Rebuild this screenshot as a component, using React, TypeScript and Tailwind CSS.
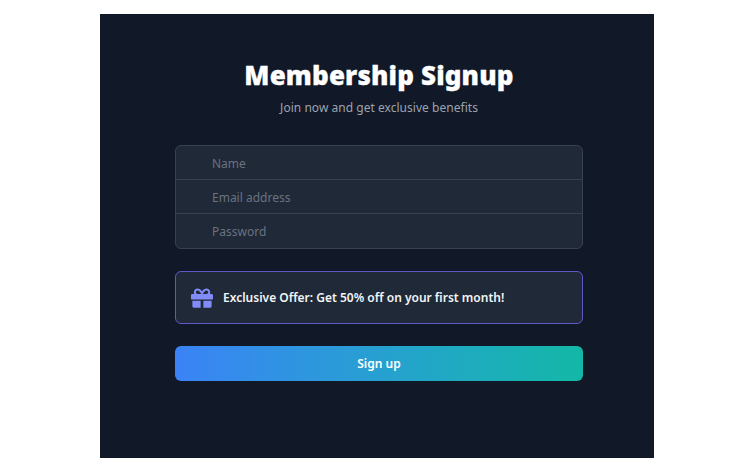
import { FaGift } from "react-icons/fa";

const fields = ["Name", "Email address", "Password"];

const App = () => {
  return (
    <div className="min-h-[469px] bg-white pt-[14px] pl-[100px] font-['Noto_Sans',sans-serif]">
      <section className="flex h-[444px] w-[554px] flex-col bg-[#111827] px-[71px] pt-[43px] pl-[75px]">
        <h2 className="text-center text-[26px] leading-[36px] font-black tracking-[0.15px] text-white [-webkit-text-stroke:0.3px_white]">
          Membership Signup
        </h2>
        <p className="mt-[6px] text-center text-[12px] leading-[18px] tracking-[0.03px] text-[#9ca3af]">
          Join now and get exclusive benefits
        </p>

        <div className="mt-[28px] overflow-hidden rounded-md border border-[#374151] bg-[#1f2937]">
          {fields.map((field) => (
            <div
              key={field}
              className="flex h-[34px] items-center border-b border-[#374151] pt-[2px] pl-[36px] text-[12px] text-[#6b7280] last:border-b-0"
            >
              {field}
            </div>
          ))}
        </div>

        <div className="mt-[22px] flex h-[53px] items-center gap-[10px] rounded-md border border-[#5f58c8] bg-[#1f2937] pl-[15px]">
          <FaGift size={22} className="text-[#818cf8]" />
          <p className="text-[12px] font-semibold text-[#f3f4f6]">
            Exclusive Offer: Get 50% off on your first month!
          </p>
        </div>

        <button className="mt-[22px] h-[35px] rounded-md bg-gradient-to-r from-[#3b82f6] to-[#14b8a6] text-[12px] font-semibold text-white">
          Sign up
        </button>
      </section>
    </div>
  );
};

export default App;
